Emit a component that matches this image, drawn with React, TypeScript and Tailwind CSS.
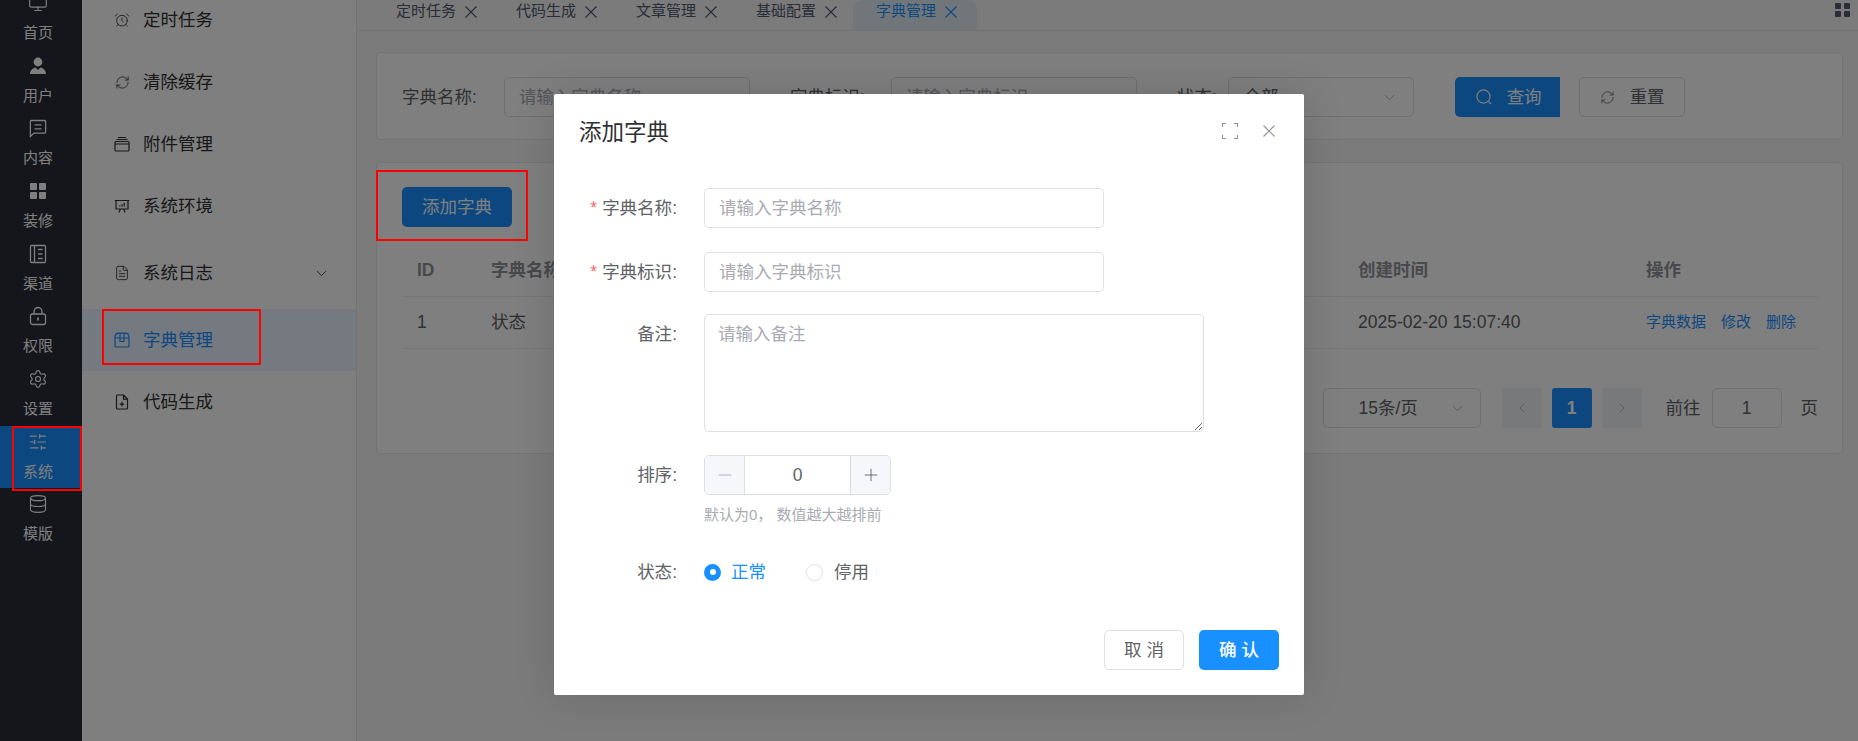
import { AlarmClock, ChevronDown, ChevronLeft, ChevronRight, Database, FileText, Minus, Monitor, Plus, RefreshCw, Settings, SlidersHorizontal } from "lucide-react"
import type { ReactNode } from "react"

const font = { fontFamily: '"Liberation Sans", "Noto Sans CJK SC", sans-serif' }

function UserIcon() {
  return (
    <svg width="20" height="20" viewBox="0 0 20 20" fill="currentColor">
      <circle cx="10" cy="6" r="4.4" />
      <path d="M2 18c0-3.6 2.6-6 5.4-6.6L10 14l2.6-2.6C15.4 12 18 14.4 18 18z" />
    </svg>
  )
}

function GridIcon() {
  return (
    <svg width="20" height="20" viewBox="0 0 20 20" fill="currentColor">
      <rect x="2" y="2" width="7" height="7" rx="1" />
      <rect x="11" y="2" width="7" height="7" rx="1" />
      <rect x="2" y="11" width="7" height="7" rx="1" />
      <rect x="11" y="11" width="7" height="7" rx="1" />
    </svg>
  )
}

function MessageIcon() {
  return (
    <svg width="20" height="20" viewBox="0 0 20 20" fill="none" stroke="currentColor" strokeWidth="1.3">
      <path d="M3.4 2.5h13.2a1 1 0 0 1 1 1v10.6a1 1 0 0 1-1 1H6L2.4 18.5V3.5a1 1 0 0 1 1-1z" />
      <path d="M6.5 6.8h7M6.5 10.8h7" />
    </svg>
  )
}

function NotebookIcon() {
  return (
    <svg width="20" height="20" viewBox="0 0 20 20" fill="none" stroke="currentColor" strokeWidth="1.3">
      <rect x="2.5" y="1.5" width="15" height="17" rx="1" />
      <path d="M6.5 1.5v17M10 5.5h4.5M10 10h4.5M10 14.5h4.5" />
    </svg>
  )
}

function LockIcon() {
  return (
    <svg width="20" height="20" viewBox="0 0 20 20" fill="none" stroke="currentColor" strokeWidth="1.3">
      <rect x="2.5" y="8" width="15" height="10.5" rx="2" />
      <path d="M6 8V5.5a4 4 0 0 1 8 0V8" />
      <path d="M10 11.5v3" strokeWidth="1.8" />
    </svg>
  )
}

function FilesIcon() {
  return (
    <svg width="16" height="16" viewBox="0 0 16 16" fill="none" stroke="currentColor" strokeWidth="1.2">
      <rect x="1" y="5.5" width="14" height="9.5" rx="1" />
      <path d="M1 8h14M2.5 3.5h11M4 1.5h8" />
    </svg>
  )
}

function BoardIcon() {
  return (
    <svg width="16" height="16" viewBox="0 0 16 16" fill="none" stroke="currentColor" strokeWidth="1.2">
      <path d="M.8 2.5h14.4M2 2.5v8.5h12V2.5M5 14.5l1.4-3.5M11 14.5L9.6 11M5.8 8.6V7.6M8 8.6V6.2M10.2 8.6V5" />
    </svg>
  )
}

function BoxIcon() {
  return (
    <svg width="16" height="16" viewBox="0 0 16 16" fill="none" stroke="currentColor" strokeWidth="1.2">
      <path d="M1 6c0-3 1.6-4.8 3.6-4.8h6.8C13.4 1.2 15 3 15 6v8a1 1 0 0 1-1 1H2a1 1 0 0 1-1-1zM1 6h14M6 1.2v8.3h4V1.2" />
    </svg>
  )
}

function DocPlusIcon() {
  return (
    <svg width="16" height="16" viewBox="0 0 16 16" fill="none" stroke="currentColor" strokeWidth="1.2">
      <path d="M3.3 1h6.4l3.8 4v9.2a.8.8 0 0 1-.8.8H3.3a.8.8 0 0 1-.8-.8V1.8a.8.8 0 0 1 .8-.8zM9.5 1v4.2h4M8 7.8v4.6M5.7 10.1h4.6" />
    </svg>
  )
}

function SearchIcon() {
  return (
    <svg width="16" height="16" viewBox="0 0 16 16" fill="none" stroke="currentColor" strokeWidth="1.2">
      <circle cx="7.5" cy="7.5" r="6.6" />
      <path d="M12.4 12.4L15 15" />
    </svg>
  )
}

function CloseIcon({ className }: { className?: string }) {
  return (
    <svg className={className} width="12" height="12" viewBox="0 0 12 12" fill="none" stroke="currentColor" strokeWidth="1.1">
      <path d="M.5.5l11 11M11.5.5l-11 11" />
    </svg>
  )
}

const mainMenu: { label: string; icon: ReactNode; active?: boolean }[] = [
  { label: "首页", icon: <Monitor size={20} strokeWidth={1.4} /> },
  { label: "用户", icon: <UserIcon /> },
  { label: "内容", icon: <MessageIcon /> },
  { label: "装修", icon: <GridIcon /> },
  { label: "渠道", icon: <NotebookIcon /> },
  { label: "权限", icon: <LockIcon /> },
  { label: "设置", icon: <Settings size={20} strokeWidth={1.4} /> },
  { label: "系统", icon: <SlidersHorizontal size={20} strokeWidth={1.4} />, active: true },
  { label: "模版", icon: <Database size={20} strokeWidth={1.4} /> },
]

const tabs = ["定时任务", "代码生成", "文章管理", "基础配置", "字典管理"]

function SideItem({ icon, label, active, arrow, className }: { icon: ReactNode; label: string; active?: boolean; arrow?: boolean; className?: string }) {
  return (
    <div className={`flex h-[62px] shrink-0 items-center gap-[13px] pl-[32px] pr-[26px] text-[17.5px] ${active ? "bg-[#e8f4ff] text-[#1890ff]" : "text-[#303133]"} ${className ?? ""}`}>
      <span className="flex w-[16px] justify-center">{icon}</span>
      <span>{label}</span>
      {arrow && <ChevronDown size={17} strokeWidth={1.2} className="ml-auto" />}
    </div>
  )
}

function FormItem({ label, required, children, className }: { label: string; required?: boolean; children: ReactNode; className?: string }) {
  return (
    <div className={`flex ${className ?? ""}`}>
      <div className="h-[40px] w-[125px] shrink-0 pr-[27px] text-right text-[17.5px] leading-[40px] text-[#606266]">
        {required && <span className="mr-[5px] text-[#f56c6c]">*</span>}
        {label}:
      </div>
      {children}
    </div>
  )
}

function PageButton({ children, active }: { children: ReactNode; active?: boolean }) {
  return (
    <div className={`flex h-[40px] w-[40px] items-center justify-center rounded-[3px] font-bold ${active ? "bg-[#1890ff] text-white" : "bg-[#f0f2f5] text-[#a8abb2]"}`}>
      {children}
    </div>
  )
}

export default function App() {
  return (
    <div style={font} className="relative flex h-[741px] w-[1858px] overflow-hidden bg-[#f6f6f6]">
      {/* main menu */}
      <aside className="w-[82px] shrink-0 bg-[#292c38]">
        <div className="-mt-[13px]">
          {mainMenu.map((item) => (
            <div key={item.label} className={`flex h-[62.67px] flex-col items-center pr-[6px] pt-[6px] text-white ${item.active ? "bg-[#1890ff]" : ""}`}>
              {item.icon}
              <span className="mt-[10px] text-[15px] leading-[20px]">{item.label}</span>
            </div>
          ))}
        </div>
      </aside>

      {/* sub menu */}
      <aside className="w-[275px] shrink-0 border-r border-[#e6e6e6] bg-white">
        <div className="-mt-[11px] flex flex-col">
          <SideItem icon={<AlarmClock size={16} strokeWidth={1.3} />} label="定时任务" />
          <SideItem icon={<RefreshCw size={15} strokeWidth={1.3} />} label="清除缓存" />
          <SideItem icon={<FilesIcon />} label="附件管理" />
          <SideItem icon={<BoardIcon />} label="系统环境" />
          <SideItem icon={<FileText size={16} strokeWidth={1.3} />} label="系统日志" arrow className="mt-[5px]" />
          <SideItem icon={<BoxIcon />} label="字典管理" active className="mt-[5px]" />
          <SideItem icon={<DocPlusIcon />} label="代码生成" />
        </div>
      </aside>

      <main className="flex min-w-0 flex-1 flex-col">
        {/* tab bar */}
        <div className="flex h-[31px] shrink-0 border-b border-[#e6e6e6] bg-[#f6f6f6] pl-[16px] pr-[8px]">
          {tabs.map((tab, i) => {
            const active = i === tabs.length - 1
            return (
              <div key={tab} className={`-mr-[4px] flex w-[124px] items-center gap-[9px] rounded-t-[10px] pb-[7px] pl-[23px] text-[15px] ${active ? "bg-[#e3edf7] text-[#1890ff]" : "text-[#515a6e]"}`}>
                <span>{tab}</span>
                <CloseIcon />
              </div>
            )
          })}
          <svg className="ml-auto mt-[3px]" width="15" height="14" viewBox="0 0 15 14" fill="#515a6e">
            <rect x="0" y="0" width="6" height="6" rx="1" />
            <rect x="9" y="0" width="6" height="6" rx="1" />
            <rect x="0" y="8" width="6" height="6" rx="1" />
            <rect x="9" y="8" width="6" height="6" rx="1" />
          </svg>
        </div>

        <div className="flex flex-col gap-[22px] pl-[19px] pr-[15px] pt-[21px]">
          {/* search card */}
          <section className="flex h-[88px] items-start rounded-[5px] border border-[#e6e8ee] bg-white pl-[25px] pt-[24px] text-[17.5px] text-[#606266]">
            <span className="leading-[40px]">字典名称:</span>
            <input placeholder="请输入字典名称" className="ml-[27px] h-[40px] w-[246px] rounded-[5px] border border-[#dcdfe6] px-[14px] placeholder:text-[#a8abb2]" />
            <span className="ml-[40px] leading-[40px]">字典标识:</span>
            <input placeholder="请输入字典标识" className="ml-[26px] h-[40px] w-[246px] rounded-[5px] border border-[#dcdfe6] px-[14px] placeholder:text-[#a8abb2]" />
            <span className="ml-[40px] leading-[40px]">状态:</span>
            <div className="ml-[11px] flex h-[40px] w-[186px] items-center justify-between rounded-[5px] border border-[#dcdfe6] pl-[15px] pr-[15px]">
              全部
              <ChevronDown size={17} strokeWidth={1.2} className="text-[#a8abb2]" />
            </div>
            <button className="ml-[41px] flex h-[40px] w-[105px] items-center gap-[15px] rounded-l-[5px] bg-[#1890ff] pl-[21px] text-white">
              <SearchIcon />
              查询
            </button>
            <button className="ml-[19px] flex h-[40px] w-[106px] items-center gap-[15px] rounded-[5px] border border-[#dcdfe6] pl-[20px] text-[#606266]">
              <RefreshCw size={15} strokeWidth={1.3} />
              重置
            </button>
          </section>

          {/* table card */}
          <section className="h-[292px] rounded-[5px] border border-[#e6e8ee] bg-white pl-[25px] pr-[24px] pt-[24px]">
            <button className="h-[40px] w-[110px] rounded-[5px] bg-[#1890ff] text-[17.5px] text-white">添加字典</button>
            <div className="mt-[18px] grid h-[52px] grid-cols-[74px_867px_288px_1fr] items-center border-b border-[#ebeef5] text-[17.5px] font-bold text-[#909399]">
              <span className="pl-[15px]">ID</span>
              <span className="pl-[15px]">字典名称</span>
              <span className="pl-[15px]">创建时间</span>
              <span className="pl-[15px]">操作</span>
            </div>
            <div className="grid h-[52px] grid-cols-[74px_867px_288px_1fr] items-center border-b border-[#ebeef5] text-[17.5px] text-[#606266]">
              <span className="pl-[15px]">1</span>
              <span className="pl-[15px]">状态</span>
              <span className="pl-[15px]">2025-02-20 15:07:40</span>
              <span className="flex gap-[15px] pl-[15px] text-[15px] text-[#1890ff]">
                <span>字典数据</span>
                <span>修改</span>
                <span>删除</span>
              </span>
            </div>
            <div className="mt-[39px] flex h-[40px] items-center justify-end text-[17.5px] text-[#606266]">
              <div className="flex h-[40px] w-[158px] items-center justify-between rounded-[5px] border border-[#dcdfe6] pl-[35px] pr-[14px]">
                15条/页
                <ChevronDown size={17} strokeWidth={1.2} className="text-[#a8abb2]" />
              </div>
              <div className="ml-[21px] flex gap-[10px]">
                <PageButton><ChevronLeft size={16} strokeWidth={1.2} /></PageButton>
                <PageButton active>1</PageButton>
                <PageButton><ChevronRight size={16} strokeWidth={1.2} /></PageButton>
              </div>
              <span className="ml-[24px]">前往</span>
              <input defaultValue="1" className="ml-[11px] h-[40px] w-[70px] rounded-[5px] border border-[#dcdfe6] text-center" />
              <span className="ml-[19px]">页</span>
            </div>
          </section>
        </div>
      </main>

      {/* dialog mask */}
      <div className="absolute inset-0 bg-black/50" />

      {/* dialog */}
      <div className="absolute left-[554px] top-[94px] h-[601px] w-[750px] rounded-[2px] bg-white px-[25px] shadow-[0_0_40px_rgba(0,0,0,0.15)]">
        <div className="flex h-[94px] items-start pt-[25px]">
          <h2 className="text-[22.5px] leading-[28px] text-[#303133]">添加字典</h2>
          <svg className="ml-auto mt-[4px] text-[#909399]" width="16" height="16" viewBox="0 0 16 16" fill="none" stroke="currentColor" strokeWidth="1.1">
            <path d="M.5 4V.5H4M12 .5h3.5V4M15.5 12v3.5H12M4 15.5H.5V12" />
          </svg>
          <CloseIcon className="ml-[25px] mr-[4px] mt-[6px] text-[#909399]" />
        </div>

        <FormItem label="字典名称" required>
          <input placeholder="请输入字典名称" className="h-[40px] w-[400px] rounded-[5px] border border-[#dcdfe6] px-[14px] text-[17.5px] placeholder:text-[#a8abb2]" />
        </FormItem>
        <FormItem label="字典标识" required className="mt-[24px]">
          <input placeholder="请输入字典标识" className="h-[40px] w-[400px] rounded-[5px] border border-[#dcdfe6] px-[14px] text-[17.5px] placeholder:text-[#a8abb2]" />
        </FormItem>
        <FormItem label="备注" className="mt-[22px]">
          <textarea placeholder="请输入备注" className="h-[118px] w-[500px] rounded-[5px] border border-[#dcdfe6] px-[13px] py-[6px] text-[17.5px] placeholder:text-[#a8abb2]" />
        </FormItem>
        <FormItem label="排序" className="mt-[23px]">
          <div>
            <div className="flex h-[40px] w-[187px] rounded-[5px] border border-[#dcdfe6] text-[#606266]">
              <div className="flex w-[40px] items-center justify-center rounded-l-[5px] border-r border-[#dcdfe6] bg-[#f5f7fa] text-[#a8abb2]">
                <Minus size={20} strokeWidth={1.1} />
              </div>
              <input defaultValue="0" className="w-0 flex-1 text-center text-[17.5px]" />
              <div className="flex w-[40px] items-center justify-center rounded-r-[5px] border-l border-[#dcdfe6] bg-[#f5f7fa]">
                <Plus size={20} strokeWidth={1.1} />
              </div>
            </div>
            <p className="mt-[10px] text-[15px] leading-[20px] text-[#a8abb2]">默认为0， 数值越大越排前</p>
          </div>
        </FormItem>
        <FormItem label="状态" className="mt-[27px]">
          <div className="flex h-[40px] items-center text-[17.5px] text-[#606266]">
            <span className="flex h-[17px] w-[17px] items-center justify-center rounded-full bg-[#1890ff]">
              <span className="h-[6px] w-[6px] rounded-full bg-white" />
            </span>
            <span className="ml-[10px] text-[#1890ff]">正常</span>
            <span className="ml-[40px] h-[17px] w-[17px] rounded-full border border-[#dcdfe6]" />
            <span className="ml-[11px]">停用</span>
          </div>
        </FormItem>

        <div className="mt-[38px] flex justify-end gap-[15px]">
          <button className="h-[40px] w-[80px] rounded-[5px] border border-[#dcdfe6] text-[17.5px] text-[#606266]">取 消</button>
          <button className="h-[40px] w-[80px] rounded-[5px] bg-[#1890ff] text-[17.5px] font-medium text-white">确 认</button>
        </div>
      </div>

      {/* annotation boxes drawn on top of the capture */}
      <div className="absolute left-[12px] top-[426px] h-[65px] w-[70px] border-2 border-[#ff0000]" />
      <div className="absolute left-[102px] top-[309px] h-[56px] w-[159px] border-2 border-[#ff0000]" />
      <div className="absolute left-[376px] top-[170px] h-[71px] w-[152px] border-2 border-[#ff0000]" />
    </div>
  )
}
